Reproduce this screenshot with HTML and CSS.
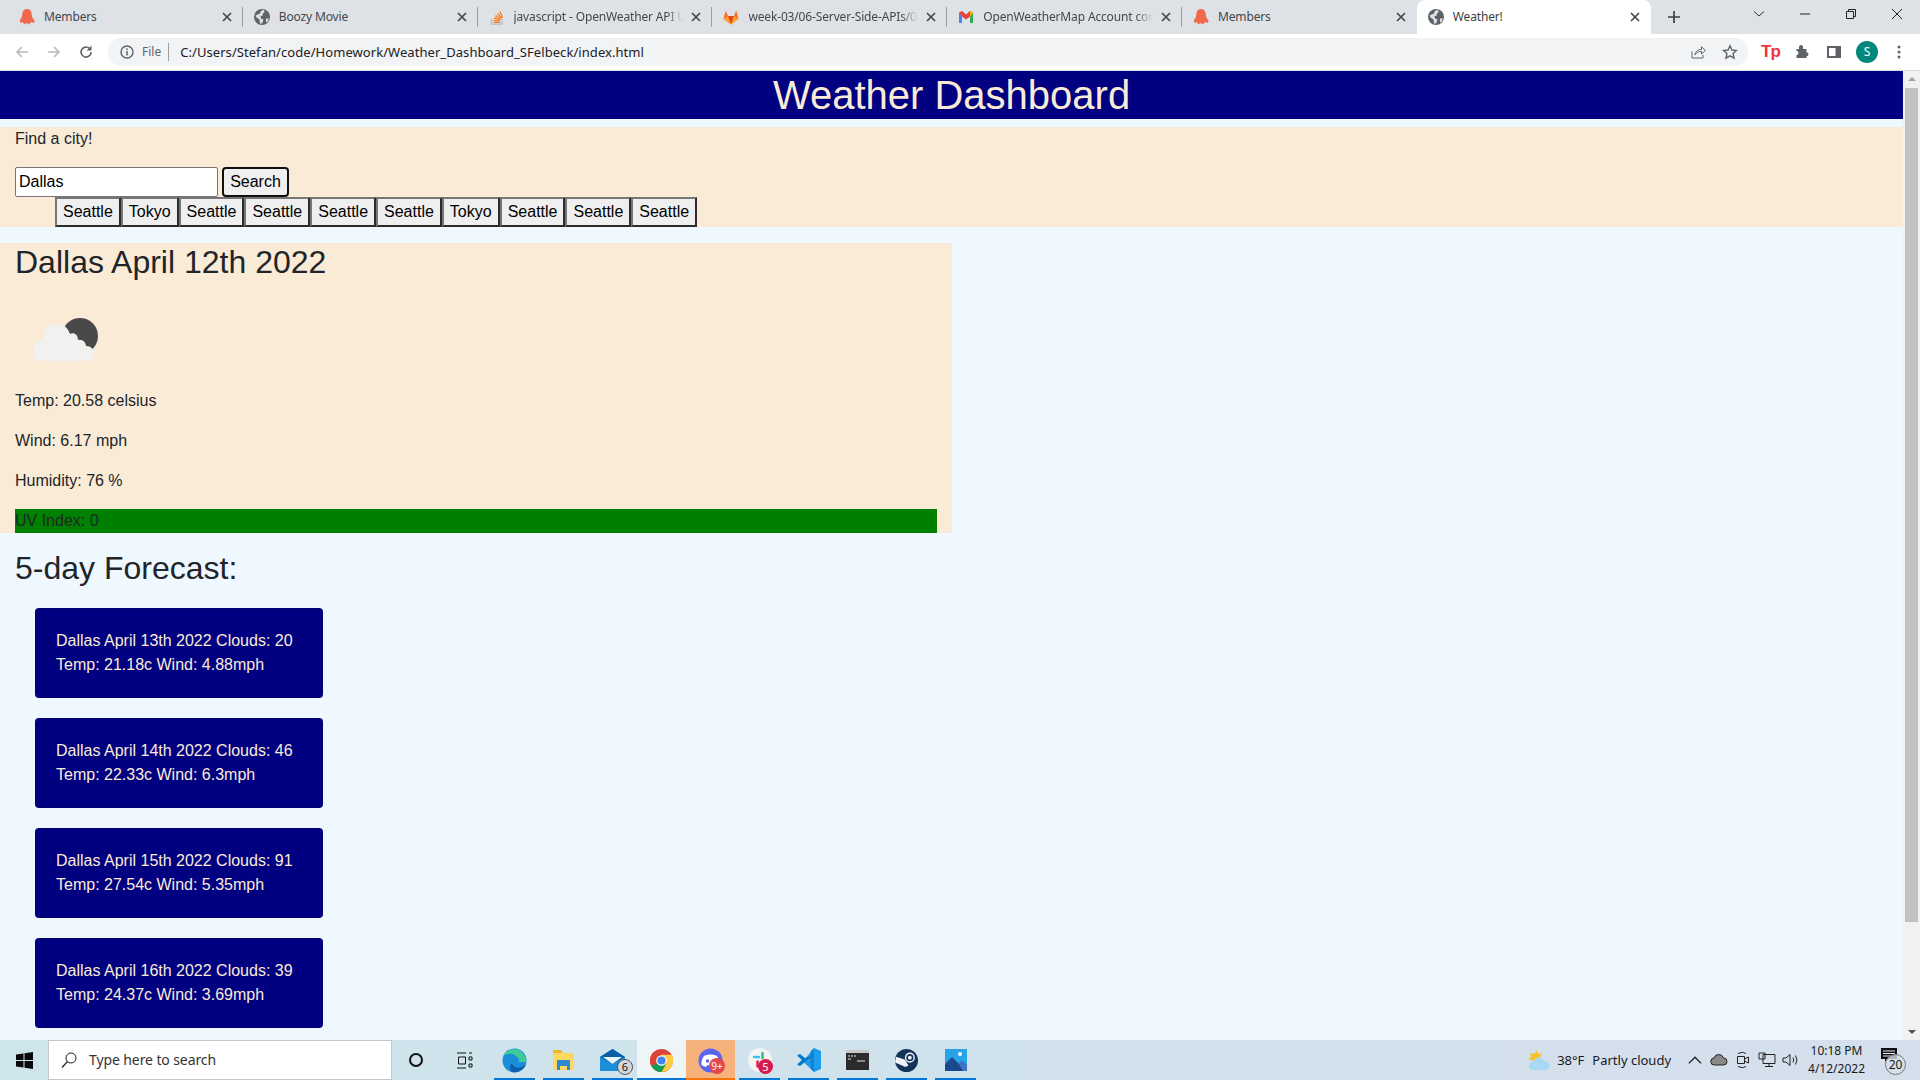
FILE: index.html
```html
<!DOCTYPE html>
<html>

<head>
  <meta charset="utf-8">
  <title>Weather!</title>
  <link rel="stylesheet" href="styles.css">
</head>

<body>
  <svg class="defs" width="0" height="0">
    <symbol id="globe" viewBox="0 0 16 16">
      <circle cx="8" cy="8" r="8" fill="#5f6368"/>
      <path d="M1.500 6.500 6 4.500 7 2 10 .8 10.500 3 8.500 5 9 6.500 6.500 7 7 9.500 9.500 10.500 8 14.500 6 14.500 5.500 10.500 2.500 8.500z" fill="#dee1e6"/>
      <path d="M12 9.500h2.700l-1 3-1.700 1z" fill="#dee1e6"/>
    </symbol>
    <symbol id="blob" viewBox="0 0 16 16">
      <path d="M8 0C4.500 0 3.200 3 3.200 6 3.200 8 2 9.500 .8 11.500L1.500 14 4 13 5 15.500 7.500 14 10 15.500 12 13 15 14 15.500 11.500C14 9.500 12.800 8 12.800 6 12.800 3 11.500 0 8 0z" fill="#f0694a"/>
    </symbol>
    <symbol id="close" viewBox="0 0 10 10">
      <path d="M1 1 9 9M9 1 1 9" stroke="#45474a" stroke-width="1.700" fill="none"/>
    </symbol>
  </svg>

  <div class="browser">
    <div class="tabstrip">
      <div class="tab">
        <svg class="favicon"><use href="#blob"/></svg>
        <span class="tab-title">Members</span>
        <svg class="tab-close"><use href="#close"/></svg>
      </div>
      <div class="tab">
        <svg class="favicon"><use href="#globe"/></svg>
        <span class="tab-title">Boozy Movie</span>
        <svg class="tab-close"><use href="#close"/></svg>
      </div>
      <div class="tab">
        <svg class="favicon" viewBox="0 0 16 16">
          <path d="M2.500 10v5.200h10.500V10" fill="none" stroke="#bcbbbb" stroke-width="1.300"/>
          <path d="M4.500 13.300h6.500M4.600 11.300l6.400.6M5.200 9l6.200 1.700M6.500 6.600l5.500 3.100M8.500 4.400l4.300 4.700M11 2.600l2.500 5.800" stroke="#f48024" stroke-width="1.300" fill="none"/>
        </svg>
        <span class="tab-title tab-fade">javascript - OpenWeather API U</span>
        <svg class="tab-close"><use href="#close"/></svg>
      </div>
      <div class="tab">
        <svg class="favicon" viewBox="0 0 16 16">
          <path d="M8 15.500 .5 9.800 2.800 1.500 5 7h6l2.200-5.500 2.300 8.300z" fill="#fc6d26"/>
          <path d="M8 15.500 5 7h6z" fill="#e24329"/>
          <path d="M8 15.500 .5 9.800 5 7zM8 15.500l7.500-5.700L11 7z" fill="#fca326"/>
        </svg>
        <span class="tab-title tab-fade">week-03/06-Server-Side-APIs/02</span>
        <svg class="tab-close"><use href="#close"/></svg>
      </div>
      <div class="tab">
        <svg class="favicon" viewBox="0 0 16 16">
          <path d="M1 3.500V14h3V7.500z" fill="#4285f4"/>
          <path d="M12 7.500V14h3V3.500z" fill="#34a853"/>
          <path d="M1 3.500 4 2 8 5.500 12 2 15 3.500 12 7.500 8 10.500 4 7.500z" fill="#ea4335"/>
          <path d="M12 2l3 1.500-3 4z" fill="#fbbc04"/>
        </svg>
        <span class="tab-title tab-fade">OpenWeatherMap Account conf</span>
        <svg class="tab-close"><use href="#close"/></svg>
      </div>
      <div class="tab">
        <svg class="favicon"><use href="#blob"/></svg>
        <span class="tab-title">Members</span>
        <svg class="tab-close"><use href="#close"/></svg>
      </div>
      <div class="tab tab-active">
        <svg class="favicon"><use href="#globe"/></svg>
        <span class="tab-title">Weather!</span>
        <svg class="tab-close"><use href="#close"/></svg>
      </div>
      <svg class="new-tab" viewBox="0 0 12 12"><path d="M6 0v12M0 6h12" stroke="#3c4043" stroke-width="1.700"/></svg>
      <div class="window-btns">
        <svg class="win-btn" viewBox="0 0 12 12"><path d="M1 3.500 6 8l5-4.500" stroke="#333" fill="none"/></svg>
        <svg class="win-btn" viewBox="0 0 12 12"><path d="M1 6h10" stroke="#222"/></svg>
        <svg class="win-btn" viewBox="0 0 12 12"><path d="M1.500 3.500h7v7h-7zM3.500 3.500v-2h7v7h-2" stroke="#222" fill="none"/></svg>
        <svg class="win-btn" viewBox="0 0 12 12"><path d="M1 1 11 11M11 1 1 11" stroke="#222" fill="none"/></svg>
      </div>
    </div>

    <div class="toolbar">
      <svg class="nav-icon" viewBox="0 0 16 16"><path d="M14 8H3M8 3 3 8l5 5" stroke="#b8babd" stroke-width="1.600" fill="none"/></svg>
      <svg class="nav-icon" viewBox="0 0 16 16"><path d="M2 8h11M8 3l5 5-5 5" stroke="#b8babd" stroke-width="1.600" fill="none"/></svg>
      <svg class="nav-icon" viewBox="0 0 16 16"><path d="M13 8a5 5 0 1 1-1.500-3.500" stroke="#5f6368" stroke-width="1.600" fill="none"/><path d="M13.500 1.500v5h-5z" fill="#5f6368"/></svg>
      <div class="omnibox">
        <svg class="info-icon" viewBox="0 0 14 14"><circle cx="7" cy="7" r="6" stroke="#5f6368" stroke-width="1.400" fill="none"/><path d="M7 6v4.500M7 3.500v1.500" stroke="#5f6368" stroke-width="1.500"/></svg>
        <span class="scheme">File</span>
        <span class="url">C:/Users/Stefan/code/Homework/Weather_Dashboard_SFelbeck/index.html</span>
        <svg class="omni-icon" viewBox="0 0 16 16"><path d="M2 7.500v6.500h11v-3" stroke="#5f6368" fill="none"/><path d="M5 11c.5-4 3-5.500 6.500-5.500V2.800L15.500 6.500l-4 3.500V7.500C8.500 7.500 6.500 8.500 5 11z" stroke="#5f6368" fill="none"/></svg>
        <svg class="omni-icon" viewBox="0 0 16 16"><path d="M8 1.800 9.900 6l4.600.5-3.400 3.100.9 4.500L8 11.800l-4 2.300.9-4.500L1.500 6.500 6.100 6z" stroke="#5f6368" stroke-width="1.400" fill="none"/></svg>
      </div>
      <div class="extensions">
        <span class="ext-tp">Tp</span>
        <svg class="ext-icon" viewBox="0 0 16 16"><path d="M1.500 6H4V4a2 2 0 0 1 4 0v2h3.500v3.300a2 2 0 0 1 0 4V15H1.500v-3a2 2 0 0 0 0-4z" fill="#5f6368" transform="translate(1 -1)"/></svg>
        <svg class="ext-icon" viewBox="0 0 16 16"><path d="M1 2h14v12H1z" fill="#5f6368"/><path d="M3 4h6.500v8H3z" fill="#fff"/></svg>
        <span class="avatar">S</span>
        <svg class="ext-icon" viewBox="0 0 16 16"><circle cx="8" cy="3" r="1.500" fill="#5f6368"/><circle cx="8" cy="8" r="1.500" fill="#5f6368"/><circle cx="8" cy="13" r="1.500" fill="#5f6368"/></svg>
      </div>
    </div>

    <div class="viewport">
      <div class="page">
        <h1 class="site-title">Weather Dashboard</h1>

        <section class="search">
          <p>Find a city!</p>
          <div class="search-row">
            <input class="city-input" type="text" value="Dallas">
            <button class="search-btn">Search</button>
          </div>
          <ul class="history">
            <li><button>Seattle</button></li>
            <li><button>Tokyo</button></li>
            <li><button>Seattle</button></li>
            <li><button>Seattle</button></li>
            <li><button>Seattle</button></li>
            <li><button>Seattle</button></li>
            <li><button>Tokyo</button></li>
            <li><button>Seattle</button></li>
            <li><button>Seattle</button></li>
            <li><button>Seattle</button></li>
          </ul>
        </section>

        <section class="current">
          <h2>Dallas April 12th 2022</h2>
          <svg class="weather-icon" viewBox="0 0 100 100">
            <circle cx="65" cy="47" r="18" fill="#49494b"/>
            <path d="M26 72C20 72 18 67 18 62 18 55 23 51 28 51 28 42 33 35 42 35 49 35 53 39 55 45 59 43 63 46 63 51 68 50 71 54 71 57 76 57 79 60 79 65 79 69 76 72 72 72z" fill="#f1f1ef"/>
          </svg>
          <p>Temp: 20.58 celsius</p>
          <p>Wind: 6.17 mph</p>
          <p>Humidity: 76 %</p>
          <div class="uv">UV Index: 0</div>
        </section>

        <section class="forecast">
          <h2>5-day Forecast:</h2>
          <div class="card">Dallas April 13th 2022 Clouds: 20 Temp: 21.18c Wind: 4.88mph</div>
          <div class="card">Dallas April 14th 2022 Clouds: 46 Temp: 22.33c Wind: 6.3mph</div>
          <div class="card">Dallas April 15th 2022 Clouds: 91 Temp: 27.54c Wind: 5.35mph</div>
          <div class="card">Dallas April 16th 2022 Clouds: 39 Temp: 24.37c Wind: 3.69mph</div>
        </section>
      </div>

      <div class="scrollbar">
        <span class="arrow-up"></span>
        <div class="track"><div class="thumb"></div></div>
        <span class="arrow-down"></span>
      </div>
    </div>

    <div class="taskbar">
      <div class="start">
        <svg width="17" height="17" viewBox="0 0 17 17"><path d="M0 2.500 7.500 1.400V8H0zM8.500 1.300 17 0v8H8.500zM0 9h7.500v6.600L0 14.500zM8.500 9H17v8l-8.500-1.300z" fill="#0a0a0a"/></svg>
      </div>
      <div class="task-search">
        <svg width="16" height="18" viewBox="0 0 16 18"><circle cx="10" cy="7" r="5" stroke="#222" fill="none"/><path d="M6.500 10.500 1 16.500" stroke="#222" stroke-width="1.200"/></svg>
        <span>Type here to search</span>
      </div>
      <div class="task-tool"><svg width="16" height="16" viewBox="0 0 16 16"><circle cx="8" cy="8" r="6" stroke="#111" stroke-width="2" fill="none"/></svg></div>
      <div class="task-tool"><svg width="17" height="17" viewBox="0 0 17 17"><path d="M1 1h9M1 16h9M2.500 5h7v7h-7zM13 1h3M13 5h3v3h-3zM13 12h3v3h-3z" stroke="#111" fill="none"/></svg></div>

      <div class="apps">
        <div class="app running">
          <svg width="25" height="25" viewBox="0 0 25 25">
            <circle cx="12.500" cy="12.500" r="12" fill="#1b8ed8"/>
            <path d="M24.500 14C24 7 19 1 12 1 7 1 3 4 1.500 8 5 5 11 5 14 8c2 2 1.500 5 0 6h10.500z" fill="#3ecb9a"/>
            <path d="M10 13c0-2.500 2-4 4-4 2.500 0 3.500 2 3 5H10z" fill="#1b8ed8"/>
            <path d="M10 15c1 5 8 7 14 1-2 6-8 9-14 8-3-3-2-7 0-9z" fill="#0c5fa8"/>
          </svg>
        </div>
        <div class="app running">
          <svg width="23" height="20" viewBox="0 0 23 20">
            <path d="M1 0h8l2 3H1z" fill="#f0b429"/>
            <path d="M1 3h21v17H1z" fill="#fcd762"/>
            <path d="M5 10h13v10h-3v-4H8v4H5z" fill="#2a8ad4"/>
          </svg>
        </div>
        <div class="app running">
          <svg width="25" height="23" viewBox="0 0 25 23">
            <path d="M0 8 12.500 0 25 8v14H0z" fill="#1c8ed8"/>
            <path d="M0 8 12.500 0 25 8 12.500 15z" fill="#0b5fa8"/>
            <path d="M3 8h19l-9.500 7z" fill="#e6f3fb"/>
          </svg>
          <span class="badge badge-gray">6</span>
        </div>
        <div class="app running app-hover">
          <svg width="23" height="23" viewBox="0 0 24 24">
            <circle cx="12" cy="12" r="12" fill="#db4437"/>
            <path d="M12 12 1.600 18A12 12 0 0 1 3 4.500z" fill="#db4437"/>
            <path d="M12 12 1.600 18A12 12 0 0 0 12 24l5-6z" fill="#0f9d58"/>
            <path d="M12 6h10.500A12 12 0 0 1 12 24l5.200-9z" fill="#ffcd40"/>
            <circle cx="12" cy="12" r="5.500" fill="#fff"/>
            <circle cx="12" cy="12" r="4.300" fill="#4285f4"/>
          </svg>
        </div>
        <div class="app running app-alert">
          <svg width="25" height="25" viewBox="0 0 25 25">
            <circle cx="12.500" cy="12.500" r="12" fill="#5865f2"/>
            <path d="M6 8c4-2 9-2 13 0 2 3 3 6 2.500 9-1.500 1-3 1.500-4.500 2l-1-1.700H9L8 19c-1.500-.5-3-1-4.500-2C3 14 4 11 6 8z" fill="#fff"/>
            <circle cx="9.500" cy="13" r="1.800" fill="#5865f2"/>
            <circle cx="15.500" cy="13" r="1.800" fill="#5865f2"/>
          </svg>
          <span class="badge badge-red">9+</span>
        </div>
        <div class="app running">
          <svg width="24" height="24" viewBox="0 0 24 24">
            <circle cx="12" cy="12" r="12" fill="#f4f4f4"/>
            <path d="M6 9h5" stroke="#36c5f0" stroke-width="2.400" stroke-linecap="round"/>
            <path d="M14.500 5v5" stroke="#2eb67d" stroke-width="2.400" stroke-linecap="round"/>
            <path d="M13.500 14.500h5" stroke="#ecb22e" stroke-width="2.400" stroke-linecap="round"/>
            <path d="M9.500 13.500v5" stroke="#e01e5a" stroke-width="2.400" stroke-linecap="round"/>
          </svg>
          <span class="badge badge-crimson">5</span>
        </div>
        <div class="app running">
          <svg width="24" height="24" viewBox="0 0 24 24">
            <path d="M17 0 24 3v18l-7 3L6 13.500z" fill="#1f9cf0"/>
            <path d="M17 0v24L13.500 21V3z" fill="#0065a9" opacity=".45"/>
            <path d="M17 7 8 14 3 18 0 16.500 5 12 0 7.500 3 6l5 4z" fill="#007acc"/>
          </svg>
        </div>
        <div class="app running">
          <svg width="23" height="20" viewBox="0 0 23 20">
            <path d="M0 0h23v20H0z" fill="#2b2b2b"/>
            <path d="M0 0h23v3H0z" fill="#c8c8c8"/>
            <path d="M2 6h2M5 6h2M8 6h2M2 9h3M11 11h8" stroke="#e8e8e8"/>
          </svg>
        </div>
        <div class="app running">
          <svg width="23" height="23" viewBox="0 0 24 24">
            <circle cx="12" cy="12" r="12" fill="#14335a"/>
            <path d="M0 14 8 17.500A4 4 0 0 0 14 17L10 11 1 8z" fill="#eef2f6"/>
            <circle cx="15.500" cy="9" r="4.500" fill="none" stroke="#eef2f6" stroke-width="1.500"/>
            <circle cx="15.500" cy="9" r="2" fill="#eef2f6"/>
          </svg>
        </div>
        <div class="app running">
          <svg width="22" height="22" viewBox="0 0 22 22">
            <path d="M0 0h22v22H0z" fill="#29a3e8"/>
            <circle cx="15" cy="5" r="2" fill="#fff"/>
            <path d="M0 22V15L7 8l7 7 3-3 5 4v6z" fill="#1a4a8c"/>
            <path d="M14 15l3-3 5 4v6h-4z" fill="#3f74c8"/>
          </svg>
        </div>
      </div>

      <div class="tray">
        <svg class="tray-weather" width="23" height="21" viewBox="0 0 23 21">
          <path d="M9 0 10 4 14 3 12 7 8 12 3 10 0 9l3-2-1-4 4 1z" fill="#f5c22c"/>
          <path d="M5 20a4 4 0 0 1 0-8 6 6 0 0 1 11-1 4.500 4.500 0 0 1 2 9z" fill="#a9d8f2"/>
        </svg>
        <span class="tray-temp">38°F</span>
        <span class="tray-cond">Partly cloudy</span>
        <svg class="tray-icon" viewBox="0 0 14 16"><path d="M1.500 11 7 5.500l5.500 5.500" stroke="#222" stroke-width="1.200" fill="none"/></svg>
        <svg class="tray-icon" viewBox="0 0 18 16"><path d="M4.500 13a3.500 3.500 0 0 1-.5-7 5 5 0 0 1 9.500 0 3.500 3.500 0 0 1 0 7z" fill="#888" stroke="#222"/></svg>
        <svg class="tray-icon" viewBox="0 0 16 18"><path d="M3 2.500Q8 0 11 2.500M3 15.500Q8 18 11 15.500" stroke="#222" fill="none"/><path d="M2.500 5.500h7v7h-7zM9.500 8l4-2v6l-4-2" stroke="#222" fill="none"/></svg>
        <svg class="tray-icon" viewBox="0 0 18 16"><path d="M5 2.500h12v9H5zM1 1h6v6H1zM11 11.500v3M7 14.500h8" stroke="#222" fill="none"/></svg>
        <svg class="tray-icon" viewBox="0 0 18 16"><path d="M1 6h3l4-3.500v11L4 10H1zM11 5.500q1.500 2.500 0 5M13.500 3.500q3 4.500 0 9" stroke="#222" fill="none"/></svg>
        <div class="clock">
          <span>10:18 PM</span>
          <span>4/12/2022</span>
        </div>
        <div class="notify">
          <svg width="16" height="14" viewBox="0 0 16 14"><path d="M0 0h16v11H6l-2 3v-3H0z" fill="#111"/><path d="M2 3h12M2 5.500h12M2 8h8" stroke="#e4e9f0"/></svg>
          <span class="notify-count">20</span>
        </div>
      </div>
    </div>
  </div>
</body>

</html>
```

FILE: styles.css
```css
* {
  box-sizing: border-box;
}

html, body {
  margin: 0;
  height: 100%;
  overflow: hidden;
}

body {
  font-family: "Liberation Sans", Arial, sans-serif;
  font-size: 16px;
  line-height: 24px;
  color: #212529;
}

.defs {
  position: absolute;
}

.browser {
  display: flex;
  flex-direction: column;
  height: 1080px;
}

/* browser chrome */
.tabstrip {
  display: flex;
  align-items: stretch;
  height: 34px;
  padding-left: 8px;
  background-color: #dee1e6;
  font-family: "Noto Sans", sans-serif;
  font-size: 12px;
  letter-spacing: -0.15px;
  color: #45474a;
}

.tab {
  position: relative;
  display: flex;
  align-items: center;
  flex: none;
  width: 234.8px;
  padding: 0 11px;
  white-space: nowrap;
}

.tab::after {
  content: "";
  position: absolute;
  right: 0;
  top: 7px;
  bottom: 7px;
  width: 1px;
  background-color: #9b9ea3;
}

.tab-active {
  width: 234px;
  background-color: #fff;
  border-radius: 8px 8px 0 0;
  color: #3c4043;
}

.tab-active::after,
.tab:nth-child(6)::after {
  display: none;
}

.favicon {
  flex: none;
  width: 16px;
  height: 16px;
  margin-right: 9px;
}

.tab-title {
  flex: 1;
  min-width: 0;
}

.tab-fade {
  -webkit-mask-image: linear-gradient(90deg, #000 90%, transparent);
  mask-image: linear-gradient(90deg, #000 90%, transparent);
}

.tab-close {
  flex: none;
  width: 10px;
  height: 10px;
  margin-left: 8px;
}

.new-tab {
  width: 12px;
  height: 12px;
  margin: 11px 0 0 17px;
}

.window-btns {
  display: flex;
  margin-left: auto;
  padding-right: 17px;
}

.win-btn {
  width: 12px;
  height: 12px;
  margin: 8px 0 0 34px;
}

.toolbar {
  display: flex;
  align-items: center;
  height: 37px;
  padding: 0 0 1px 14px;
  background-color: #fff;
  border-bottom: 1px solid #dadce0;
}

.nav-icon {
  flex: none;
  width: 16px;
  height: 16px;
  margin-right: 16px;
}

.omnibox {
  flex: none;
  display: flex;
  align-items: center;
  width: 1640px;
  height: 28px;
  margin-left: -2px;
  padding-left: 12px;
  background-color: #f1f3f4;
  border-radius: 14px;
  font-family: "Noto Sans", sans-serif;
  font-size: 13px;
  color: #202124;
}

.info-icon {
  width: 14px;
  height: 14px;
}

.scheme {
  margin-left: 8px;
  padding-right: 7px;
  border-right: 1px solid #9aa0a6;
  font-size: 12px;
  line-height: 18px;
  color: #5f6368;
}

.url {
  flex: 1;
  margin-left: 11px;
  letter-spacing: 0.06px;
}

.omni-icon {
  width: 16px;
  height: 16px;
  margin-right: 16px;
}

.omni-icon:last-child {
  margin-right: 10px;
}

.extensions {
  flex: none;
  display: flex;
  align-items: center;
  margin-left: 13px;
}

.ext-tp {
  width: 16px;
  margin-right: 17px;
  font: bold 17px "Liberation Sans", sans-serif;
  letter-spacing: -1px;
  color: #f2323f;
}

.ext-icon {
  width: 16px;
  height: 16px;
  margin-right: 16px;
}

.ext-icon:last-child {
  margin-right: 0;
}

.avatar {
  display: flex;
  align-items: center;
  justify-content: center;
  width: 22px;
  height: 22px;
  margin: 0 13px 0 -2px;
  border-radius: 50%;
  background-color: #00897b;
  color: #fff;
  font: 12px "Noto Sans", sans-serif;
}

/* page */
.viewport {
  flex: 1;
  display: flex;
  min-height: 0;
  background-color: #f0f8ff;
}

.page {
  flex: 1;
  min-width: 0;
  overflow: hidden;
}

.site-title {
  margin: 0 0 8px;
  background-color: #000080;
  color: #faebd7;
  font-size: 40px;
  font-weight: 400;
  line-height: 48px;
  text-align: center;
}

.search {
  margin-bottom: 16px;
  padding: 0 15px;
  background-color: #faebd7;
}

.search p {
  margin: 0 0 16px;
}

.search-row {
  display: flex;
  gap: 4px;
}

.city-input {
  width: 203px;
  height: 30px;
  padding: 1px 3px;
  border: 1px solid #767676;
  border-radius: 2px;
  background-color: #fff;
  font: 16px "Liberation Sans", sans-serif;
  color: #000;
}

.search-btn {
  width: 67px;
  height: 30px;
  padding: 0;
  border: 2px solid #101010;
  border-radius: 4px;
  background-color: #efefef;
  font: 16px "Liberation Sans", sans-serif;
  color: #000;
}

.history {
  display: flex;
  margin: 0;
  padding: 0 0 0 40px;
  list-style: none;
}

.history button {
  height: 30px;
  padding: 0 6px;
  border: 2px solid;
  border-color: #767676 #2b2b2b #2b2b2b #767676;
  background-color: #efefef;
  font: 16px "Liberation Sans", sans-serif;
  color: #000;
}

.current {
  width: 951.5px;
  padding: 0 15px;
  background-color: #faebd7;
}

h2 {
  margin: 0 0 8px;
  font-size: 32px;
  font-weight: 400;
  line-height: 38.4px;
}

.weather-icon {
  display: block;
  width: 100px;
  height: 100px;
}

.current p {
  margin: 0 0 16px;
}

.uv {
  background-color: #008000;
}

.forecast {
  padding: 16px 15px 0;
}

.forecast h2 {
  margin-bottom: 20px;
}

.card {
  width: 288px;
  margin: 0 0 20px 20px;
  padding: 20px;
  border: 1px solid rgba(0, 0, 0, 0.125);
  border-radius: 4px;
  background-color: #000080;
  color: #faebd7;
}

.scrollbar {
  position: relative;
  flex: none;
  display: flex;
  flex-direction: column;
  align-items: center;
  width: 17px;
  background-color: #f1f1f1;
}

.arrow-up, .arrow-down {
  flex: none;
  width: 0;
  height: 0;
  border-left: 4px solid transparent;
  border-right: 4px solid transparent;
}

.arrow-up {
  margin: 6px 0;
  border-bottom: 4px solid #a3a3a3;
}

.arrow-down {
  margin: 6px 0;
  border-top: 4px solid #505050;
}

.track {
  flex: 1;
  width: 100%;
  padding: 1px 2px 0;
}

.thumb {
  height: 834px;
  background-color: #c1c1c1;
}

/* windows taskbar */
.taskbar {
  display: flex;
  align-items: stretch;
  height: 40px;
  background: linear-gradient(90deg, #cfe5ec, #d0e2ec 50%, #d5dfec);
  font-family: "Noto Sans", sans-serif;
  font-size: 13px;
  color: #1a1a1a;
}

.start {
  display: flex;
  align-items: center;
  justify-content: center;
  width: 48px;
}

.task-search {
  display: flex;
  align-items: center;
  gap: 12px;
  width: 344px;
  padding-left: 12px;
  border: 1px solid #c4c8cc;
  background-color: #fff;
  font-size: 14px;
  letter-spacing: -0.1px;
  color: #333;
}

.task-tool {
  display: flex;
  align-items: center;
  justify-content: center;
  width: 48px;
}

.apps {
  display: flex;
  margin-left: 2px;
}

.app {
  position: relative;
  display: flex;
  align-items: center;
  justify-content: center;
  width: 49px;
}

.running::after {
  content: "";
  position: absolute;
  bottom: 0;
  left: 4px;
  right: 4px;
  height: 2px;
  background-color: #0078d7;
}

.app-hover {
  background-color: #eef5f7;
}

.app-hover::after {
  left: 0;
  right: 0;
}

.app-alert {
  background-color: #f6b27a;
}

.app-alert::after {
  left: 0;
  right: 0;
  background-color: #f97306;
}

.badge {
  position: absolute;
  display: flex;
  align-items: center;
  justify-content: center;
  right: 4px;
  bottom: 5px;
  width: 16px;
  height: 16px;
  border-radius: 50%;
  font-size: 11px;
  line-height: 16px;
}

.badge-gray {
  background-color: #d3d7da;
  border: 1px solid #555;
  color: #111;
}

.badge-red {
  right: 10px;
  bottom: 6px;
  background-color: #e5474d;
  color: #fff;
  font-size: 10px;
}

.badge-crimson {
  right: 11px;
  bottom: 6px;
  width: 15px;
  height: 15px;
  background-color: #d81b4f;
  color: #fff;
}

.tray {
  display: flex;
  align-items: center;
  margin-left: auto;
  padding-right: 13px;
}

.tray-weather {
  margin-right: 6px;
}

.tray-temp {
  margin-right: 8px;
}

.tray-cond {
  margin-right: 15px;
}

.tray-icon {
  width: 18px;
  height: 18px;
  margin-right: 6px;
}

.clock {
  display: flex;
  flex-direction: column;
  align-items: center;
  margin: 0 12px 0 2px;
  font-size: 12px;
  line-height: 18px;
}

.notify {
  position: relative;
  width: 30px;
  height: 30px;
  padding: 3px 0 0 4px;
  line-height: 0;
}

.notify-count {
  position: absolute;
  left: 8px;
  top: 9px;
  width: 21px;
  height: 21px;
  border: 1px solid #777;
  border-radius: 50%;
  background-color: rgba(214, 222, 232, 0.8);
  font-size: 12px;
  line-height: 19px;
  text-align: center;
}
```
